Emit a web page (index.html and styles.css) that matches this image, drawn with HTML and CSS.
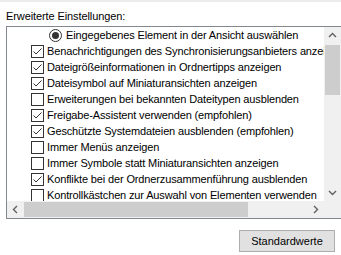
FILE: index.html
```html
<!DOCTYPE html>
<html lang="de">
<head>
<meta charset="utf-8">
<title>Erweiterte Einstellungen</title>
<link rel="stylesheet" href="styles.css">
</head>
<body>
<div class="top-strip"></div>
<div class="label">Erweiterte Einstellungen:</div>
<div class="listbox">
  <div class="rows">
    <div class="row sub"><span class="radio"><span class="dot"></span></span><span class="txt">Eingegebenes Element in der Ansicht auswählen</span></div>
    <div class="row"><span class="cb"><svg viewBox="0 0 11 11"><polyline points="1.5,5.5 4,8 9.5,2.5"/></svg></span><span class="txt">Benachrichtigungen des Synchronisierungsanbieters anzeigen</span></div>
    <div class="row"><span class="cb"><svg viewBox="0 0 11 11"><polyline points="1.5,5.5 4,8 9.5,2.5"/></svg></span><span class="txt">Dateigrößeinformationen in Ordnertipps anzeigen</span></div>
    <div class="row"><span class="cb"><svg viewBox="0 0 11 11"><polyline points="1.5,5.5 4,8 9.5,2.5"/></svg></span><span class="txt">Dateisymbol auf Miniaturansichten anzeigen</span></div>
    <div class="row"><span class="cb"></span><span class="txt">Erweiterungen bei bekannten Dateitypen ausblenden</span></div>
    <div class="row"><span class="cb"><svg viewBox="0 0 11 11"><polyline points="1.5,5.5 4,8 9.5,2.5"/></svg></span><span class="txt">Freigabe-Assistent verwenden (empfohlen)</span></div>
    <div class="row"><span class="cb"><svg viewBox="0 0 11 11"><polyline points="1.5,5.5 4,8 9.5,2.5"/></svg></span><span class="txt">Geschützte Systemdateien ausblenden (empfohlen)</span></div>
    <div class="row"><span class="cb"></span><span class="txt">Immer Menüs anzeigen</span></div>
    <div class="row"><span class="cb"></span><span class="txt">Immer Symbole statt Miniaturansichten anzeigen</span></div>
    <div class="row"><span class="cb"><svg viewBox="0 0 11 11"><polyline points="1.5,5.5 4,8 9.5,2.5"/></svg></span><span class="txt">Konflikte bei der Ordnerzusammenführung ausblenden</span></div>
    <div class="row"><span class="cb"></span><span class="txt">Kontrollkästchen zur Auswahl von Elementen verwenden</span></div>
  </div>
  <div class="vscroll">
    <div class="arrow"><svg viewBox="0 0 17 17"><polyline points="5,10 8.5,6.5 12,10"/></svg></div>
    <div class="vtrack"><div class="vthumb"></div></div>
    <div class="arrow"><svg viewBox="0 0 17 17"><polyline points="5,7 8.5,10.5 12,7"/></svg></div>
  </div>
  <div class="hscroll">
    <div class="arrow"><svg viewBox="0 0 17 17"><polyline points="10,5 6.5,8.5 10,12"/></svg></div>
    <div class="htrack"><div class="hthumb"></div></div>
    <div class="arrow"><svg viewBox="0 0 17 17"><polyline points="7,5 10.5,8.5 7,12"/></svg></div>
  </div>
  <div class="corner"></div>
</div>
<div class="footer">
  <button class="btn">Standardwerte</button>
</div>
</body>
</html>
```
FILE: styles.css
```css
html, body {
  margin: 0;
  padding: 0;
  background: #ffffff;
  overflow: hidden;
  width: 341px;
  height: 255px;
}
body {
  font-family: "Liberation Sans", Arial, sans-serif;
  font-size: 11px;
  color: #000;
}
.top-strip {
  height: 2px;
  background: #ececec;
}
.label {
  margin-top: 6px;
  margin-left: 6px;
  height: 16px;
  line-height: 16px;
  white-space: nowrap;
  letter-spacing: -0.1px;
}
.listbox {
  margin-top: 2px;
  margin-left: 6px;
  width: 336px;
  border: 1px solid #828790;
  display: grid;
  grid-template-columns: 317px 17px;
  grid-template-rows: 174px 17px;
}
.rows {
  overflow: hidden;
  background: #fff;
}
.row {
  height: 16px;
  line-height: 16px;
  display: flex;
  align-items: center;
  padding-left: 24px;
  white-space: nowrap;
}
.row.sub {
  padding-left: 42px;
}
.txt {
  margin-left: 3px;
  line-height: 16px;
  letter-spacing: -0.14px;
}
.row.sub .txt {
  margin-left: 4px;
}
.cb {
  flex: none;
  width: 11px;
  height: 11px;
  border: 1px solid #333;
  background: #fff;
  display: block;
}
.cb svg {
  display: block;
  width: 11px;
  height: 11px;
}
.cb svg polyline {
  fill: none;
  stroke: #333;
  stroke-width: 1;
}
.radio {
  flex: none;
  width: 11px;
  height: 11px;
  border: 1px solid #333;
  border-radius: 50%;
  display: flex;
  align-items: center;
  justify-content: center;
}
.dot {
  width: 7px;
  height: 7px;
  border-radius: 50%;
  background: #333;
}
.vscroll {
  background: #f0f0f0;
  display: flex;
  flex-direction: column;
}
.arrow {
  width: 17px;
  height: 17px;
  flex: none;
}
.arrow svg {
  display: block;
  width: 17px;
  height: 17px;
}
.arrow polyline {
  fill: none;
  stroke: #606060;
  stroke-width: 1.4;
}
.vtrack {
  flex: 1;
  padding: 1px;
}
.vthumb {
  height: 50px;
  background: #cdcdcd;
}
.hscroll {
  background: #f0f0f0;
  display: flex;
}
.htrack {
  flex: 1;
  padding: 1px 0;
}
.hthumb {
  width: 224px;
  height: 15px;
  background: #cdcdcd;
}
.corner {
  background: #f0f0f0;
}
.footer {
  display: flex;
  justify-content: flex-end;
  padding-top: 11px;
  padding-right: 6px;
}
.btn {
  width: 96px;
  height: 22px;
  background: #e1e1e1;
  border: 1px solid #adadad;
  font-family: "Liberation Sans", Arial, sans-serif;
  font-size: 11px;
  color: #000;
  padding: 0;
  margin: 0;
}
```
